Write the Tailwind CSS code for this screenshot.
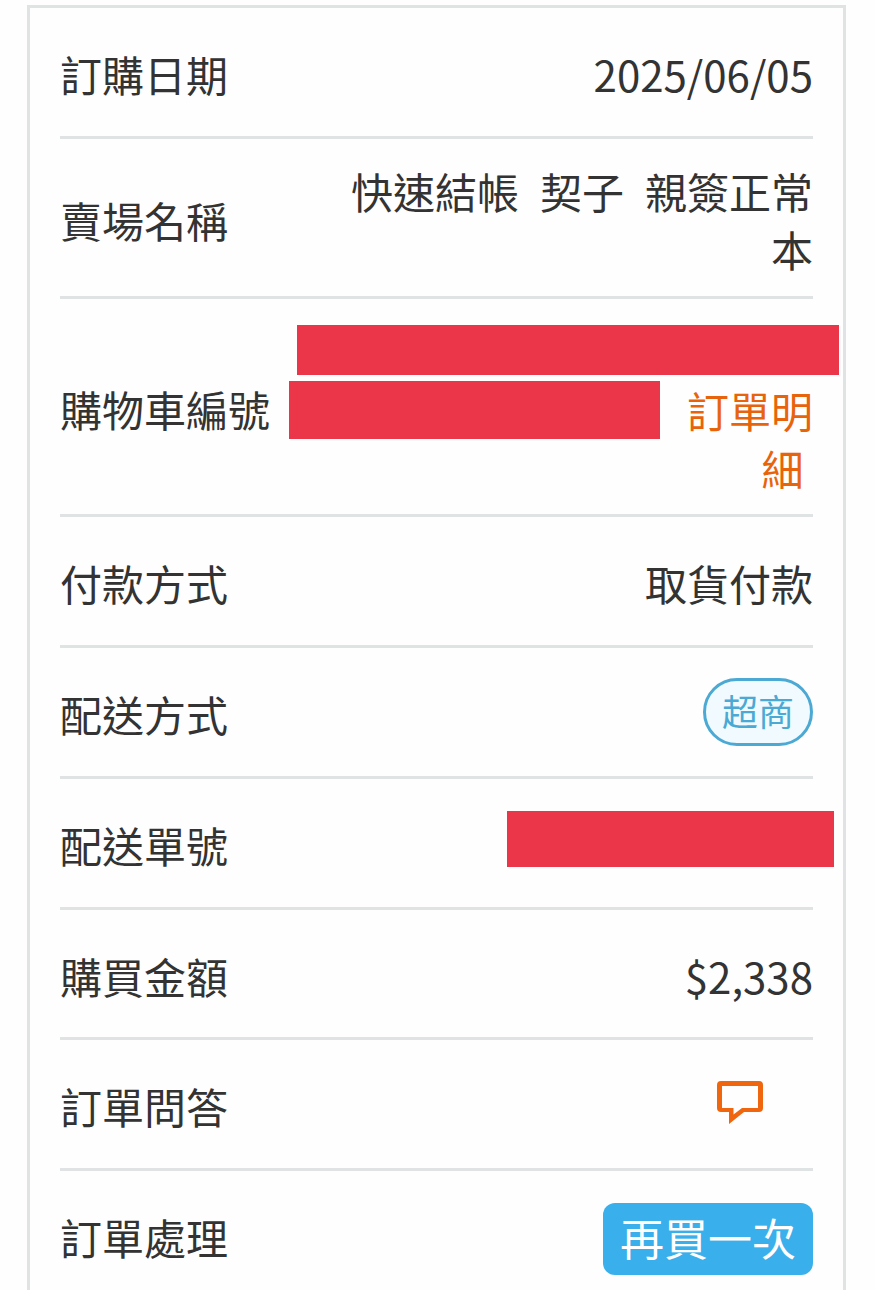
<!DOCTYPE html>
<html lang="zh-Hant">

<head>
    <meta charset="UTF-8">
    <meta name="viewport" content="width=device-width, initial-scale=1.0">
    <title>訂單</title>
    <script src="https://cdn.jsdelivr.net/npm/@tailwindcss/browser@4"></script>
</head>

<body class="bg-[#fefefe] text-[#333] font-['Noto_Sans_CJK_TC',sans-serif] text-[42px] leading-[58px]">

    <main class="mt-[5px] ml-[27px] mr-[29px] border-[3px] border-[#dfe3e4] px-[30px]">
        <dl>
            <div class="flex items-center min-h-[131px] border-b-[3px] border-[#dfe3e4]">
                <dt class="w-1/3 shrink-0 whitespace-nowrap pt-1">訂購日期</dt>
                <dd class="w-2/3 text-right pt-1">2025/06/05</dd>
            </div>
            <div class="flex items-center min-h-[160px] border-b-[3px] border-[#dfe3e4]">
                <dt class="w-1/3 shrink-0 whitespace-nowrap pt-1">賣場名稱</dt>
                <dd class="w-2/3 text-right pt-1">快速結帳&ensp;契子&ensp;親簽正常本</dd>
            </div>
            <div class="flex items-center min-h-[218px] border-b-[3px] border-[#dfe3e4]">
                <dt class="w-1/3 shrink-0 whitespace-nowrap pt-1">購物車編號</dt>
                <dd class="w-2/3 pt-2 flex flex-col gap-[6px]">
                    <!-- hidden cart number -->
                    <div class="h-[50px] -ml-[14px] -mr-[26px] bg-[#eb3549]"></div>
                    <div class="flex items-start -ml-[22px]">
                        <div class="h-[58px] flex-1 mr-[25px] bg-[#eb3549]"></div>
                        <a href="#" class="w-32 text-right text-[#e8640c]">訂單明細&nbsp;</a>
                    </div>
                </dd>
            </div>
            <div class="flex items-center min-h-[131px] border-b-[3px] border-[#dfe3e4]">
                <dt class="w-1/3 shrink-0 whitespace-nowrap pt-1">付款方式</dt>
                <dd class="w-2/3 text-right pt-1">取貨付款</dd>
            </div>
            <div class="flex items-center min-h-[131px] border-b-[3px] border-[#dfe3e4]">
                <dt class="w-1/3 shrink-0 whitespace-nowrap pt-1">配送方式</dt>
                <dd class="w-2/3 flex justify-end">
                    <span class="border-[3px] border-[#4ba9d4] bg-[#f0faff] text-[#4ba9d4] text-[36px] leading-[58px] pb-1 rounded-full px-4">超商</span>
                </dd>
            </div>
            <div class="flex items-center min-h-[131px] border-b-[3px] border-[#dfe3e4]">
                <dt class="w-1/3 shrink-0 whitespace-nowrap pt-1">配送單號</dt>
                <dd class="w-2/3 flex justify-end pb-2">
                    <!-- hidden tracking number -->
                    <div class="w-[327px] h-[56px] -mr-[21px] bg-[#eb3549]"></div>
                </dd>
            </div>
            <div class="flex items-center min-h-[130px] border-b-[3px] border-[#dfe3e4]">
                <dt class="w-1/3 shrink-0 whitespace-nowrap pt-1">購買金額</dt>
                <dd class="w-2/3 text-right pt-1">$2,338</dd>
            </div>
            <div class="flex items-center min-h-[131px] border-b-[3px] border-[#dfe3e4]">
                <dt class="w-1/3 shrink-0 whitespace-nowrap pt-1">訂單問答</dt>
                <dd class="w-2/3 flex justify-end pr-[50px] pb-1">
                    <a href="#" aria-label="訂單問答" class="text-[#f0660f]">
                        <svg class="block" width="46" height="43" viewBox="0 0 46 43" fill="currentColor" fill-rule="evenodd">
                            <path d="M4 0H42a4 4 0 0 1 4 4V27a4 4 0 0 1-4 4H27L12 43V31H4a4 4 0 0 1-4-4V4a4 4 0 0 1 4-4ZM5 5V27H16.500V33.500L25 27H41V5Z" />
                        </svg>
                    </a>
                </dd>
            </div>
            <div class="flex items-center min-h-[131px] border-b-[3px] border-[#dfe3e4]">
                <dt class="w-1/3 shrink-0 whitespace-nowrap pt-1">訂單處理</dt>
                <dd class="w-2/3 flex justify-end pt-2">
                    <button type="button" class="bg-[#39b0eb] text-white text-[44px] leading-[68px] pb-1 rounded-xl px-[17px]">再買一次</button>
                </dd>
            </div>
        </dl>
    </main>

</body>

</html>
